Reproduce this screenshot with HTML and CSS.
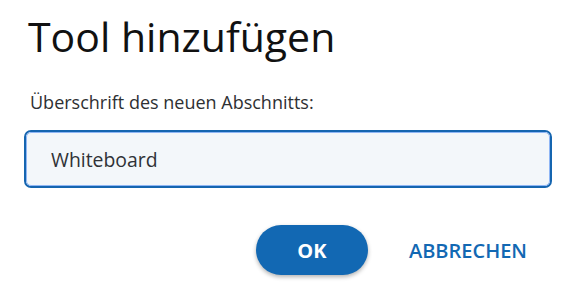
FILE: index.html
```html
<!DOCTYPE html>
<html lang="de">
<head>
<meta charset="utf-8">
<link rel="stylesheet" href="styles.css">
</head>
<body>
<div class="dialog">
  <h1 class="title">Tool hinzufügen</h1>
  <label class="label" for="heading">Überschrift des neuen Abschnitts:</label>
  <div class="field">
    <input id="heading" class="input" type="text" value="Whiteboard">
  </div>
  <div class="actions">
    <button class="btn-ok">OK</button>
    <button class="btn-cancel">ABBRECHEN</button>
  </div>
</div>
</body>
</html>
```
FILE: styles.css
```css
html, body {
  margin: 0;
  padding: 0;
  background: #fff;
}
body {
  font-family: "Open Sans", "Noto Sans", sans-serif;
  width: 571px;
  height: 289px;
  overflow: hidden;
}
.dialog {
  padding: 8px 19px 0 24px;
  display: flex;
  flex-direction: column;
}
.title {
  margin: 0 0 0 4px;
  font-size: 41px;
  font-weight: 400;
  line-height: 56px;
  color: #111;
}
.label {
  margin: 26px 0 0 6px;
  font-size: 18px;
  font-weight: 500;
  color: #2e3033;
  line-height: 24px;
}
.field {
  margin-top: 16px;
  border: 2px solid #1565b0;
  border-radius: 7px;
  padding: 0;
  height: 54px;
  box-sizing: content-box;
  display: flex;
}
.input {
  flex: 1;
  border: 1px solid #8fb6f5;
  border-radius: 5px;
  background: #f3f7fa;
  margin: 0;
  padding: 0 0 0 24px;
  font-family: "Open Sans", "Noto Sans", sans-serif;
  font-size: 19.4px;
  color: #2f3236;
  outline: none;
}
.actions {
  display: flex;
  justify-content: flex-end;
  align-items: center;
  margin-top: 37px;
  gap: 41px;
  padding-right: 25px;
}
.btn-ok {
  width: 112px;
  height: 50px;
  border: none;
  border-radius: 25px;
  background: #1268b3;
  color: #fff;
  font-family: "Open Sans", "Noto Sans", sans-serif;
  font-size: 20px;
  font-weight: 700;
  box-shadow: 0 2px 4px rgba(0,0,0,0.3);
  padding: 0;
}
.btn-cancel {
  border: none;
  background: none;
  padding: 0;
  color: #1268b3;
  font-family: "Open Sans", "Noto Sans", sans-serif;
  font-size: 20px;
  font-weight: 600;
}
```
